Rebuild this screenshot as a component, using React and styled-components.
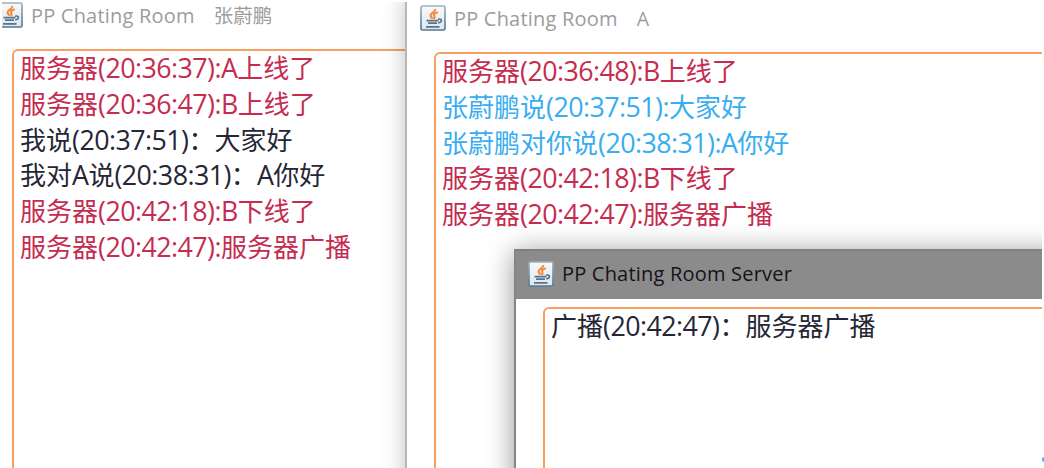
import React from "react";
import styled, { createGlobalStyle } from "styled-components";

const Global = createGlobalStyle`
  * { box-sizing: border-box; }
  body { margin: 0; background: #fff; overflow: hidden; }
`;

const Screen = styled.div`
  position: relative;
  width: 1044px;
  height: 468px;
  padding: 2px 2px 0;
  background: #fff;
  overflow: hidden;
`;

const Desktop = styled.main`
  position: relative;
  width: 100%;
  height: 100%;
  overflow: hidden;
  font-family: "Open Sans", "Noto Sans CJK SC", sans-serif;
`;

const Window = styled.section`
  position: absolute;
  left: ${(p) => p.$x}px;
  top: ${(p) => p.$y}px;
  width: 1100px;
  height: 700px;
  display: flex;
  flex-direction: column;
  background: #fff;
  border-left: ${(p) => (p.$edge ? `2px solid ${p.$edge}` : "0")};
  box-shadow: ${(p) => p.$shadow || "none"};
`;

const TitleBar = styled.header`
  flex: none;
  height: ${(p) => p.$height}px;
  padding: ${(p) => p.$pad};
  display: flex;
  align-items: flex-start;
  gap: 8px;
  color: ${(p) => (p.$active ? "#171219" : "#9d9b9d")};
  background: ${(p) => (p.$active ? "#8b8b8b" : "#fff")};
  border-top: ${(p) => (p.$active ? "2px solid #808080" : "0")};
`;

const Title = styled.h1`
  margin: 0;
  padding-top: ${(p) => p.$drop || 0}px;
  display: flex;
  gap: 19px;
  font-size: 20px;
  line-height: 26px;
  font-weight: 400;
  letter-spacing: 0.2px;
  white-space: nowrap;
`;

const UserName = styled.span`
  font-size: 19.5px;
  letter-spacing: 0;
`;

const Messages = styled.div`
  flex: 1;
  margin: ${(p) => p.$top || 0}px 0 0 ${(p) => p.$left}px;
  padding: 0 0 0 6px;
  border: 2px solid #f8a062;
  border-radius: 6px;
`;

const Message = styled.p`
  position: relative;
  top: -1px;
  margin: 0;
  height: 35.8px;
  line-height: 35.8px;
  font-size: 26px;
  white-space: pre;
  color: ${(p) => ({ server: "#c52c50", peer: "#38adf0", own: "#262636" })[p.$from]};
`;

const Latin = styled.span`
  font-size: 26.8px;
  letter-spacing: -0.54px;
`;

const ButtonEdge = styled.i`
  position: absolute;
  right: 0;
  top: 457px;
  width: 2px;
  height: 5px;
  background: #5db1ea;
  border-radius: 2px 0 0 2px;
`;

const Icon = styled.svg`
  flex: none;
  width: 26px;
  height: 26px;
`;

function JavaIcon() {
  return (
    <Icon viewBox="0 0 26 26" fill="none">
      <defs>
        <linearGradient id="tile" x1="0" y1="0" x2="0" y2="1">
          <stop offset="0" stopColor="#f9f9f9" />
          <stop offset="1" stopColor="#dfe6eb" />
        </linearGradient>
        <linearGradient id="rim" x1="0" y1="0" x2="0" y2="1">
          <stop offset="0" stopColor="#9cb1c2" />
          <stop offset="1" stopColor="#557996" />
        </linearGradient>
      </defs>
      <rect x="1" y="1" width="24" height="24" rx="1.5" fill="url(#tile)" stroke="url(#rim)" strokeWidth="1.7" />
      <path d="M15.3 4c.5 3.2-5.4 4-4.7 7 .3 1.2 1.6 1.6 1.6 2.8M17.8 7.3c-2.5.6-4.3 1.9-3.6 3.3.6 1.2.9 1.9-.5 3.2" stroke="#f5883b" strokeWidth="2.1" />
      <path d="M6.5 15.6h12M8 18.2h9M6 21.8h13.5" stroke="#53758f" strokeWidth="1.8" />
      <path d="M18 14.2c4.5-1.2 4.6 2.8.2 3.8" stroke="#53758f" strokeWidth="1.6" />
    </Icon>
  );
}

function ChatLines({ lines }) {
  return lines.map(([from, text]) => (
    <Message key={text} $from={from}>
      {text.split(/([\x21-\x7e]+)/).map((part, i) => (i % 2 ? <Latin key={i}>{part}</Latin> : part))}
    </Message>
  ));
}

const firstRoom = [
  ["server", "服务器(20:36:37):A上线了"],
  ["server", "服务器(20:36:47):B上线了"],
  ["own", "我说(20:37:51)：大家好"],
  ["own", "我对A说(20:38:31)：A你好"],
  ["server", "服务器(20:42:18):B下线了"],
  ["server", "服务器(20:42:47):服务器广播"],
];

const secondRoom = [
  ["server", "服务器(20:36:48):B上线了"],
  ["peer", "张蔚鹏说(20:37:51):大家好"],
  ["peer", "张蔚鹏对你说(20:38:31):A你好"],
  ["server", "服务器(20:42:18):B下线了"],
  ["server", "服务器(20:42:47):服务器广播"],
];

const broadcasts = [["own", "广播(20:42:47)：服务器广播"]];

export default function App() {
  return (
    <>
      <Global />
      <Screen>
        <Desktop>
          <Window $x={-5} $y={-1}>
            <TitleBar $height={48} $pad="1px 0 0 0">
              <JavaIcon />
              <Title $drop={1}>
                PP Chating Room <UserName>张蔚鹏</UserName>
              </Title>
            </TitleBar>
            <Messages $left={15}><ChatLines lines={firstRoom} /></Messages>
          </Window>
          <Window $x={403} $y={-6} $edge="#b7b7b7" $shadow="0 0 22px rgba(0,0,0,.25)">
            <TitleBar $height={56} $pad="9px 0 0 13px">
              <JavaIcon />
              <Title $drop={1}>
                PP Chating Room <UserName>A</UserName>
              </Title>
            </TitleBar>
            <Messages $left={27}><ChatLines lines={secondRoom} /></Messages>
          </Window>
          <Window $x={512} $y={247} $edge="#858585" $shadow="0 3px 26px rgba(0,0,0,.42)">
            <TitleBar $active $height={50} $pad="10px 0 0 12px">
              <JavaIcon />
              <Title>PP Chating Room Server</Title>
            </TitleBar>
            <Messages $left={27} $top={8}><ChatLines lines={broadcasts} /></Messages>
          </Window>
        </Desktop>
        <ButtonEdge />
      </Screen>
    </>
  );
}
